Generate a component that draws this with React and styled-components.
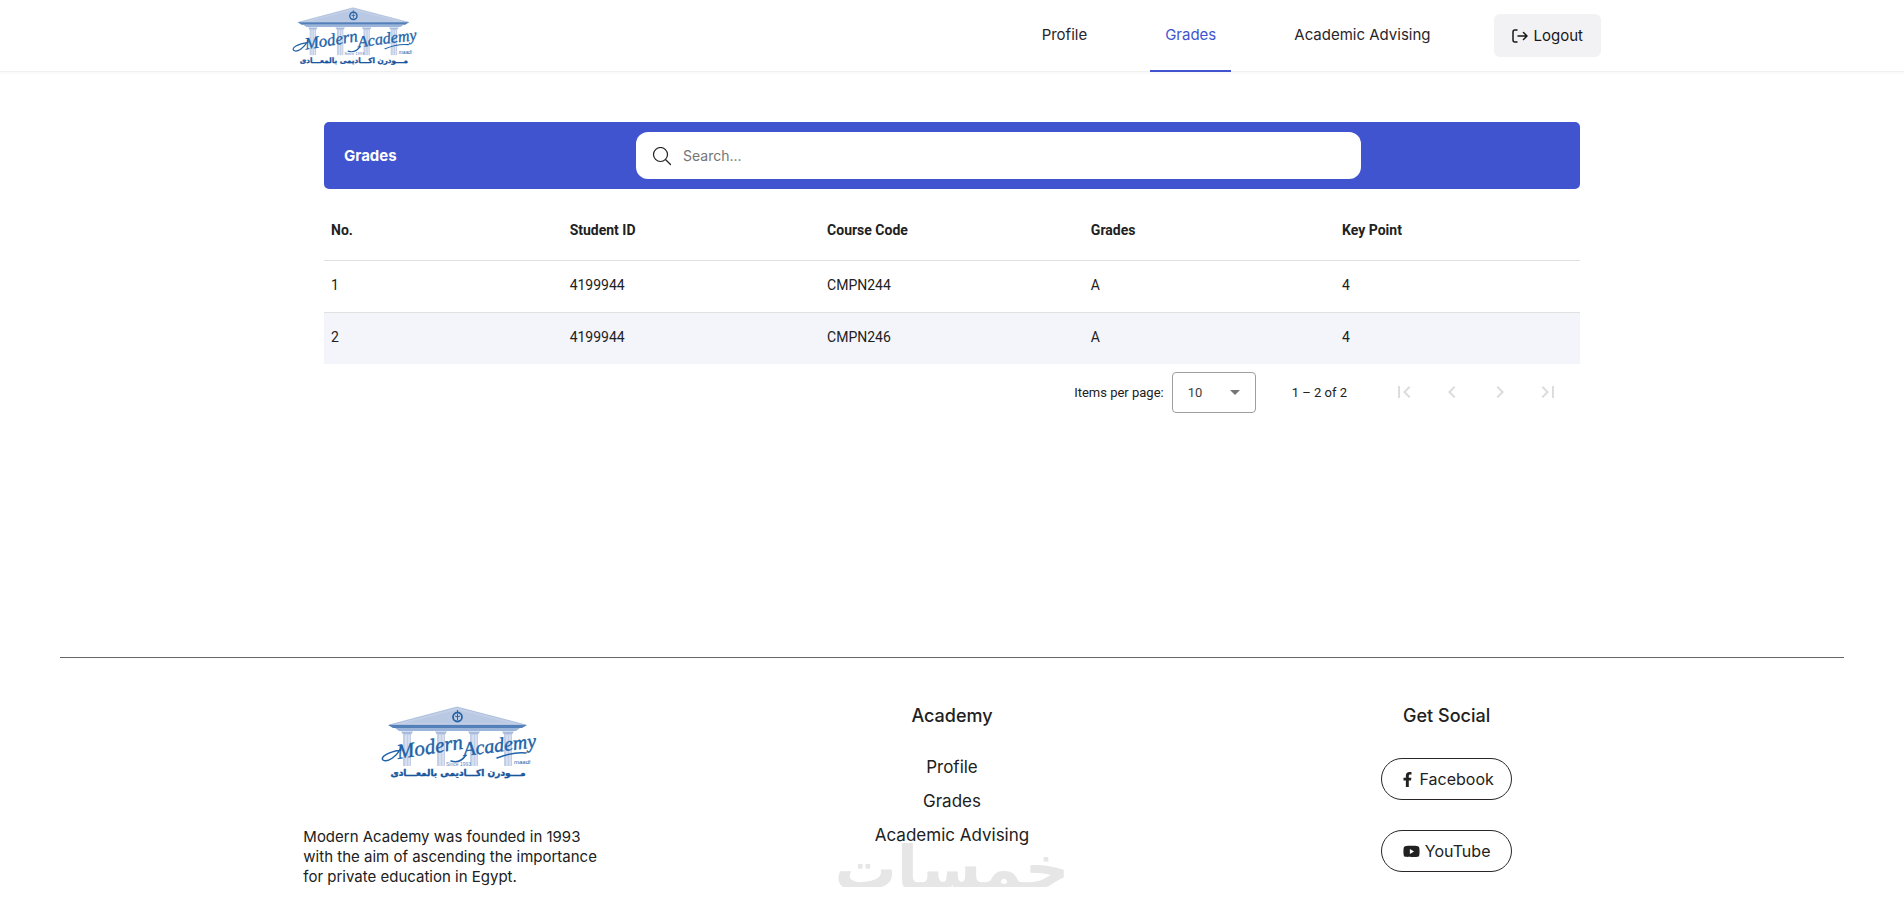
import React, { useState } from 'react';
import styled, { createGlobalStyle } from 'styled-components';
import { FaFacebookF, FaYoutube } from 'react-icons/fa';
import {
  MdFirstPage,
  MdChevronLeft,
  MdChevronRight,
  MdLastPage,
  MdArrowDropDown,
} from 'react-icons/md';

const GlobalStyle = createGlobalStyle`
  * {
    box-sizing: border-box;
  }

  body {
    margin: 0;
    background-color: #ffffff;
    color: #212121;
    font-family: Inter, 'Open Sans', sans-serif;
    font-size: 15px;
  }
`;

const Header = styled.header`
  border-bottom: 1px solid #f0f0f0;
  box-shadow: 0 1px 3px rgba(0, 0, 0, 0.04);
`;

const HeaderInner = styled.div`
  display: flex;
  align-items: stretch;
  justify-content: space-between;
  max-width: 1320px;
  height: 71px;
  margin: 0 auto;
  padding: 0 11px 0 0;
`;

const LogoLink = styled.a`
  display: flex;
  align-items: center;
`;

const LogoSvg = styled.svg`
  display: block;
  width: ${(props) => props.$width}px;
  overflow: visible;
`;

const Nav = styled.nav`
  display: flex;
  align-items: center;
  gap: 48px;
`;

const NavLink = styled.a`
  display: flex;
  align-items: center;
  align-self: stretch;
  margin-bottom: -1px;
  padding: 0 15px 2px;
  border-bottom: 2px solid ${(props) => (props.$active ? '#4154cf' : 'transparent')};
  color: ${(props) => (props.$active ? '#4154cf' : '#2a2529')};
  text-decoration: none;
`;

const LogoutButton = styled.button`
  display: flex;
  align-items: center;
  gap: 6px;
  height: 43px;
  padding: 0 18px;
  border: none;
  border-radius: 6px;
  background-color: #f2f2f4;
  color: #18181b;
  font: inherit;
  cursor: pointer;
`;

const Main = styled.main`
  max-width: 1256px;
  min-height: 585px;
  margin: 0 auto;
  padding-top: 50px;
`;

const TitleBar = styled.div`
  display: grid;
  grid-template-columns: 292px minmax(0, 725px) 1fr;
  align-items: center;
  padding: 10px 0 10px 20px;
  border-radius: 5px;
  background-color: #4154cf;
`;

const Title = styled.h1`
  margin: 0;
  color: #ffffff;
  font-size: 15px;
  font-weight: 700;
`;

const SearchBox = styled.label`
  display: flex;
  align-items: center;
  gap: 11px;
  height: 47px;
  padding: 0 16px;
  border-radius: 12px;
  background-color: #ffffff;
`;

const SearchInput = styled.input`
  flex: 1;
  min-width: 0;
  padding: 0;
  border: none;
  outline: none;
  background: transparent;
  color: #212121;
  font: inherit;
  font-size: 14px;

  &::placeholder {
    color: #757575;
  }
`;

const GradesTable = styled.table`
  width: 100%;
  margin-top: 15px;
  border-collapse: separate;
  border-spacing: 0;
  table-layout: fixed;
  font-family: Roboto, sans-serif;
  font-size: 14px;
  text-align: left;
`;

const HeadCell = styled.th`
  width: ${(props) => props.$width};
  height: 57px;
  padding: 0 7px 4px;
  border-bottom: 1px solid #e0e0e0;
  font-weight: 700;
`;

const Row = styled.tr`
  background-color: #ffffff;

  &:nth-child(even) {
    background-color: #f4f5fb;
  }
`;

const Cell = styled.td`
  height: 52px;
  padding: 0 7px 3px;
  border-bottom: 1px solid #e0e0e0;

  ${Row}:last-child & {
    height: 51px;
    border-bottom: none;
  }
`;

const Paginator = styled.div`
  display: flex;
  align-items: center;
  justify-content: flex-end;
  min-height: 56px;
  padding-right: 8px;
  font-family: Roboto, sans-serif;
  font-size: 13px;
`;

const SelectWrap = styled.div`
  display: grid;
  align-items: center;
  width: 84px;
  height: 41px;
  margin-left: 8px;
  border: 1px solid #9e9e9e;
  border-radius: 4px;

  > * {
    grid-area: 1 / 1;
  }

  > svg {
    justify-self: end;
    margin-right: 8px;
    color: #757575;
    pointer-events: none;
  }
`;

const PageSize = styled.select`
  width: 100%;
  height: 100%;
  padding: 0 15px;
  border: none;
  background: transparent;
  color: #3d3d3d;
  font: inherit;
  appearance: none;
`;

const RangeLabel = styled.span`
  margin: 0 33px 0 36px;
`;

const PageButton = styled.button`
  display: grid;
  place-items: center;
  width: 48px;
  height: 48px;
  padding: 0;
  border: none;
  background: transparent;
  color: #dcdcdc;
`;

const Footer = styled.footer`
  position: relative;
  margin: 0 60px;
  border-top: 1px solid #666666;
`;

const FooterGrid = styled.div`
  display: grid;
  grid-template-columns: repeat(3, 1fr);
  max-width: 1484px;
  margin: 0 auto;
  padding-top: 48px;
`;

const FooterColumn = styled.div`
  display: flex;
  flex-direction: column;
  align-items: center;
`;

const About = styled.p`
  width: 308px;
  margin: 49px 0 0;
  line-height: 20px;
  white-space: nowrap;
`;

const FooterTitle = styled.h2`
  margin: 0 0 24px;
  font-size: 18px;
  font-weight: 500;
  line-height: 20px;
`;

const FooterLinks = styled.ul`
  display: grid;
  margin: 0;
  padding: 0;
  list-style: none;
  font-size: 17px;
  line-height: 34px;
  text-align: center;
`;

const FooterLink = styled.a`
  color: inherit;
  text-decoration: none;
`;

const SocialLinks = styled.div`
  display: grid;
  gap: 30px;
  padding-top: 8px;
`;

const SocialLink = styled.a`
  display: flex;
  align-items: center;
  justify-content: center;
  gap: 5px;
  width: 131px;
  height: 42px;
  border: 1px solid #2a2529;
  border-radius: 21px;
  color: #212121;
  font-size: 16px;
  text-decoration: none;
`;

const Watermark = styled.svg`
  position: absolute;
  top: 178px;
  left: 50%;
  width: 230px;
  height: 72px;
  overflow: visible;
  transform: translateX(-50%);
  pointer-events: none;
`;

const grades = [
  { no: 1, studentId: '4199944', course: 'CMPN244', grade: 'A', point: 4 },
  { no: 2, studentId: '4199944', course: 'CMPN246', grade: 'A', point: 4 },
];

const navItems = ['Profile', 'Grades', 'Academic Advising'];

const Logo = ({ width }) => (
  <LogoSvg $width={width} viewBox="0 0 152 72" role="img" aria-label="Modern Academy">
    <path d="M8 19 76 1l69 18Z" fill="#c3cfe6" stroke="#8fa9d2" strokeWidth=".6" />
    <path d="M24 17 76 4l53 13Z" fill="#b9c8e3" />
    <path d="M7 19h139l-5 3H12Z" fill="#5380b9" />
    <path d="M14 22h125l-4 3H18Z" fill="#9bb4da" />
    <circle cx="76.500" cy="11" r="4.500" fill="#c3cfe6" stroke="#2563a5" strokeWidth="1.800" />
    <path d="M76.500 8v6M74 10l2.500 1 2.500-1M76.500 4V6" stroke="#2563a5" strokeWidth="1" fill="none" />
    {[26, 60, 93, 127].map((x) => (
      <g key={x}>
        <path d={`M${x - 6} 25.500h12l-2 3h-8Z`} fill="#a6bbdd" />
        <path d={`M${x - 4} 28h8v32h-8Z`} fill="#c3cfe7" />
        <path d={`M${x - 1} 29v31M${x + 2} 29v31`} stroke="#e9eef7" strokeWidth="1" />
      </g>
    ))}
    <g
      fill="#2062a8"
      stroke="#2062a8"
      strokeWidth=".4"
      fontFamily="'Liberation Serif', serif"
      fontStyle="italic"
    >
      <text x="17" y="53" fontSize="21" transform="rotate(-9 17 53)">Modern</text>
      <text x="83" y="50" fontSize="20" transform="rotate(-7 83 50)">Academy</text>
    </g>
    <path
      d="M20 44C7 46-1 51 2 54c4 3 14-3 19-14M85 49c-4 6-9 8-15 6M116 52c10-4 20-6 29-5"
      fill="none"
      stroke="#2062a8"
      strokeWidth="1.500"
      strokeLinecap="round"
    />
    <text x="65" y="60" fill="#5f87bd" fontFamily="'Liberation Sans', sans-serif" fontSize="5">
      Since 1993
    </text>
    <text x="133" y="58" fill="#2062a8" fontFamily="'Liberation Sans', sans-serif" fontSize="6" fontStyle="italic">
      maadi
    </text>
    <text
      x="77"
      y="70"
      fill="#17559d"
      stroke="#17559d"
      strokeWidth=".4"
      fontFamily="'DejaVu Sans', sans-serif"
      fontSize="9"
      fontWeight="700"
      textAnchor="middle"
      direction="rtl"
    >
      مـــودرن اكـــاديمى بالمعـــادى
    </text>
  </LogoSvg>
);

const LogoutIcon = () => (
  <svg width="16" height="14" viewBox="0 0 16 14" fill="none" stroke="currentColor" strokeWidth="1.500" strokeLinecap="round" strokeLinejoin="round" aria-hidden="true">
    <path d="M5 1H3a2 2 0 0 0-2 2v8a2 2 0 0 0 2 2h2M6 7h9M11.500 3.500 15 7l-3.500 3.500" />
  </svg>
);

const SearchIcon = () => (
  <svg width="20" height="20" viewBox="0 0 20 20" fill="none" stroke="#212121" strokeWidth="1.200" strokeLinecap="round" aria-hidden="true">
    <circle cx="8.500" cy="8.500" r="7" />
    <path d="m14 14 4.500 4.500" />
  </svg>
);

const App = () => {
  const [search, setSearch] = useState('');
  const [pageSize, setPageSize] = useState('10');

  const rows = grades.filter((row) =>
    row.course.toLowerCase().includes(search.toLowerCase())
  );

  return (
    <>
      <GlobalStyle />
      <Header>
        <HeaderInner>
          <LogoLink href="#home"><Logo width={122} /></LogoLink>
          <Nav>
            {navItems.map((item) => (
              <NavLink key={item} href="#" $active={item === 'Grades'}>{item}</NavLink>
            ))}
            <LogoutButton type="button"><LogoutIcon />Logout</LogoutButton>
          </Nav>
        </HeaderInner>
      </Header>

      <Main>
        <TitleBar>
          <Title>Grades</Title>
          <SearchBox>
            <SearchIcon />
            <SearchInput
              type="text"
              aria-label="Search"
              placeholder="Search..."
              value={search}
              onChange={(e) => setSearch(e.target.value)}
            />
          </SearchBox>
        </TitleBar>

        <GradesTable>
          <thead>
            <tr>
              <HeadCell $width="19%">No.</HeadCell>
              <HeadCell $width="20.5%">Student ID</HeadCell>
              <HeadCell $width="21%">Course Code</HeadCell>
              <HeadCell $width="20%">Grades</HeadCell>
              <HeadCell>Key Point</HeadCell>
            </tr>
          </thead>
          <tbody>
            {rows.map((row) => (
              <Row key={row.no}>
                <Cell>{row.no}</Cell>
                <Cell>{row.studentId}</Cell>
                <Cell>{row.course}</Cell>
                <Cell>{row.grade}</Cell>
                <Cell>{row.point}</Cell>
              </Row>
            ))}
          </tbody>
        </GradesTable>

        <Paginator>
          <label htmlFor="page-size">Items per page:</label>
          <SelectWrap>
            <PageSize id="page-size" value={pageSize} onChange={(e) => setPageSize(e.target.value)}>
              <option>5</option>
              <option>10</option>
              <option>20</option>
            </PageSize>
            <MdArrowDropDown size={24} />
          </SelectWrap>
          <RangeLabel>1 – 2 of 2</RangeLabel>
          <PageButton type="button" disabled aria-label="First page"><MdFirstPage size={24} /></PageButton>
          <PageButton type="button" disabled aria-label="Previous page"><MdChevronLeft size={24} /></PageButton>
          <PageButton type="button" disabled aria-label="Next page"><MdChevronRight size={24} /></PageButton>
          <PageButton type="button" disabled aria-label="Last page"><MdLastPage size={24} /></PageButton>
        </Paginator>
      </Main>

      <Footer>
        <Watermark viewBox="0 0 230 72" aria-hidden="true">
          <text
            x="115"
            y="54"
            fill="#e6e6e6"
            fontFamily="'DejaVu Sans', sans-serif"
            fontSize="62"
            fontWeight="700"
            textAnchor="middle"
            direction="rtl"
          >
            خمسات
          </text>
        </Watermark>
        <FooterGrid>
          <FooterColumn>
            <Logo width={152} />
            <About>
              Modern Academy was founded in 1993
              <br />
              with the aim of ascending the importance
              <br />
              for private education in Egypt.
            </About>
          </FooterColumn>
          <FooterColumn>
            <FooterTitle>Academy</FooterTitle>
            <FooterLinks>
              {navItems.map((item) => (
                <li key={item}><FooterLink href="#">{item}</FooterLink></li>
              ))}
            </FooterLinks>
          </FooterColumn>
          <FooterColumn>
            <FooterTitle>Get Social</FooterTitle>
            <SocialLinks>
              <SocialLink href="#"><FaFacebookF size={15} />Facebook</SocialLink>
              <SocialLink href="#"><FaYoutube size={17} />YouTube</SocialLink>
            </SocialLinks>
          </FooterColumn>
        </FooterGrid>
      </Footer>
    </>
  );
};

export default App;
